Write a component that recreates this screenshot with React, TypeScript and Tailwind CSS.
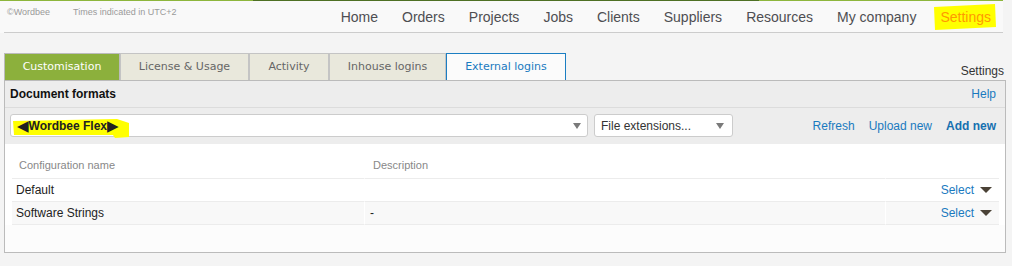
import React from "react";

const navItems = ["Home", "Orders", "Projects", "Jobs", "Clients", "Suppliers", "Resources", "My company"];

const tabs: { label: string; w: string; kind: "green" | "beige" | "white" }[] = [
  { label: "Customisation", w: "w-[116px]", kind: "green" },
  { label: "License & Usage", w: "w-[129px]", kind: "beige" },
  { label: "Activity", w: "w-[80px]", kind: "beige" },
  { label: "Inhouse logins", w: "w-[117px]", kind: "beige" },
  { label: "External logins", w: "w-[120px]", kind: "white" },
];

function SmallArrow() {
  return (
    <svg width="8" height="6" viewBox="0 0 8 6" className="shrink-0">
      <polygon points="0,0 8,0 4,6" fill="#7a7a7a" />
    </svg>
  );
}

function SelectLink() {
  return (
    <div className="flex items-center justify-end gap-[6px] pr-[7px]">
      <span className="text-[12px] text-[#1a7abf]">Select</span>
      <svg width="12" height="6" viewBox="0 0 12 6">
        <polygon points="0,0 12,0 6,6" fill="#4a4236" />
      </svg>
    </div>
  );
}

export default function App() {
  return (
    <div className="min-h-[266px] w-full bg-[#f4f4f4] font-['Liberation_Sans',Arial,sans-serif] text-[#222]">
      {/* Header */}
      <div className="w-[1003px] bg-[#f9f9f9]">
        <div className="flex h-px">
          <div className="w-[253px] bg-[#8db63c]" />
          <div className="w-[506px] bg-[#4e7024]" />
          <div className="flex-1 bg-[#8db63c]" />
        </div>
        <div className="ml-1 flex h-[32px] border-b border-[#cccccc]">
          <div className="flex items-start pl-[3px] pt-[6px] text-[9px] leading-[10px] text-[#9a9a9a]">
            <span>©Wordbee</span>
            <span className="ml-[23px]">Times indicated in UTC+2</span>
          </div>
          <nav className="ml-auto flex items-center text-[14px] leading-[16px] text-[#4e4e52]">
            {navItems.map((n) => (
              <span key={n} className="px-3">
                {n}
              </span>
            ))}
            <span className="relative flex h-full items-center px-3 text-[#ff9900]">
              <svg
                className="absolute left-0 top-0"
                width="74"
                height="31"
                viewBox="0 0 74 31"
              >
                <polygon points="6,6 67,3 68,26 7,29" fill="#ffff00" />
              </svg>
              <span className="relative">Settings</span>
            </span>
          </nav>
        </div>
      </div>

      {/* Tabs + panel */}
      <div className="px-1 pt-[20px]">
        <div className="flex h-[27px] w-[1002px] items-stretch">
          {tabs.map((t) => (
            <div
              key={t.label}
              className={
                t.kind === "green"
                  ? `${t.w} flex items-center justify-center border border-b-0 border-[#bbbbbb] bg-[#8cb03c] font-['DejaVu_Sans',Verdana,sans-serif] text-[11px] text-white`
                  : t.kind === "white"
                  ? `${t.w} flex items-center justify-center border border-b-0 border-[#1b7ec2] bg-[#fbfbfb] font-['DejaVu_Sans',Verdana,sans-serif] text-[11px] text-[#1a7abf]`
                  : `${t.w} flex items-center justify-center border border-b-0 border-[#c4c4c4] bg-[#e9e8dc] font-['DejaVu_Sans',Verdana,sans-serif] text-[11px] text-[#666666]`
              }
            >
              {t.label}
            </div>
          ))}
          <div className="ml-auto mr-[2px] self-end pb-[2px] text-[12px] leading-[14px] text-[#333]">
            Settings
          </div>
        </div>

        <div className="w-[1002px] border border-[#bbbbbb] bg-white">
          {/* Panel title */}
          <div className="flex h-[27px] items-center justify-between border-b border-[#dcdcdc] bg-[#ededed] pl-[5px] pr-[9px]">
            <span className="text-[12px] font-bold text-[#111]">Document formats</span>
            <span className="text-[12px] text-[#1a7abf]">Help</span>
          </div>

          {/* Toolbar */}
          <div className="flex h-[36px] items-start bg-[#ededed] pl-[5px] pr-[9px] pt-[6px]">
            <div className="relative flex h-[23px] w-[578px] items-center rounded-[3px] border border-[#cccccc] bg-white pr-[6px]">
              <svg
                className="absolute left-0 top-0"
                width="122"
                height="24"
                viewBox="0 0 122 24"
              >
                <polygon points="2,6 106,4 118,8 118,22 104,23 102,20 3,20" fill="#ffff00" />
              </svg>
              <span className="relative ml-[6px] flex items-center text-[12px] font-bold leading-[14px] text-[#222]">
                <span className="font-['DejaVu_Sans',sans-serif] text-[15px] font-normal leading-[14px]">◀</span>
                <span>Wordbee Flex</span>
                <span className="font-['DejaVu_Sans',sans-serif] text-[15px] font-normal leading-[14px]">▶</span>
              </span>
              <span className="ml-auto">
                <SmallArrow />
              </span>
            </div>
            <div className="ml-[6px] flex h-[23px] w-[139px] items-center rounded-[3px] border border-[#cccccc] bg-white pl-[6px] pr-[8px]">
              <span className="text-[12px] text-[#333]">File extensions...</span>
              <span className="ml-auto">
                <SmallArrow />
              </span>
            </div>
            <div className="ml-auto flex h-[23px] items-center gap-[14px] text-[12px] text-[#1a7abf]">
              <span>Refresh</span>
              <span>Upload new</span>
              <span className="font-bold text-[#1670b0]">Add new</span>
            </div>
          </div>

          {/* Table */}
          <div className="px-[7px] pr-[6px] pt-[8px]">
            <div className="grid grid-cols-[352px_521px_1fr]">
              <div className="flex h-[27px] items-center border-b border-[#ececec] pl-[7px] text-[11px] text-[#888888]">
                Configuration name
              </div>
              <div className="flex h-[27px] items-center border-b border-l border-[#ececec] border-l-white pl-[8px] text-[11px] text-[#888888]">
                Description
              </div>
              <div className="h-[27px] border-b border-l border-[#ececec] border-l-white" />

              <div className="flex h-[23px] items-center border-b border-[#ececec] pl-[4px] text-[12px]">
                Default
              </div>
              <div className="h-[23px] border-b border-l border-[#ececec] border-l-white" />
              <div className="flex h-[23px] items-center justify-end border-b border-l border-[#ececec] border-l-white">
                <SelectLink />
              </div>

              <div className="flex h-[23px] items-center border-b border-[#ececec] bg-[#f8f8f8] pl-[4px] text-[12px]">
                Software Strings
              </div>
              <div className="flex h-[23px] items-center border-b border-l border-[#ececec] border-l-white bg-[#f8f8f8] pl-[5px] text-[12px]">
                -
              </div>
              <div className="flex h-[23px] items-center justify-end border-b border-l border-[#ececec] border-l-white bg-[#f8f8f8]">
                <SelectLink />
              </div>
            </div>
          </div>
          <div className="h-[27px] bg-[#fcfcfc]" />
        </div>
      </div>
    </div>
  );
}
